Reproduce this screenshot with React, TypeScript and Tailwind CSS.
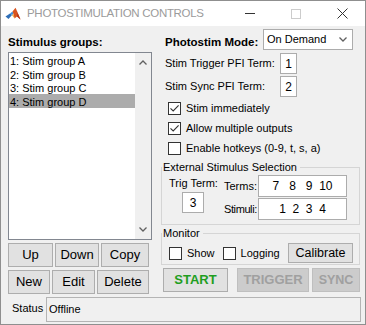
import React from 'react'

const groups = ['1: Stim group A', '2: Stim group B', '3: Stim group C', '4: Stim group D']

function MatlabIcon() {
  return (
    <svg width="16" height="14" viewBox="0 0 16 14" className="shrink-0">
      <path d="M0.5 9.5 L5 6.5 L7 8 L3.5 12 Z" fill="#2f6fb8" />
      <path d="M5 6.5 L7.5 4.5 L8.5 7 L7 8 Z" fill="#3f8fd8" />
      <path d="M7.5 4.5 L10.5 0.8 L15.5 12.5 L12 9.5 L9.5 11.5 L8.5 7 Z" fill="#d9541e" />
      <path d="M10.5 0.8 L12.5 6 L12 9.5 L15.5 12.5 Z" fill="#b3361a" />
      <path d="M8.5 7 L9.5 11.5 L7 8 Z" fill="#f0a030" />
    </svg>
  )
}

function Check({ checked }: { checked?: boolean }) {
  return (
    <span className="w-[13px] h-[13px] border border-[#333333] bg-white flex items-center justify-center shrink-0">
      {checked && (
        <svg width="11" height="11" viewBox="0 0 11 11">
          <path d="M1.5 5.3 L4.2 8 L9.6 2.4" fill="none" stroke="#333333" strokeWidth="1.1" />
        </svg>
      )}
    </span>
  )
}

function Btn({ label, w }: { label: string; w: string }) {
  return (
    <div className={`${w} h-[24px] bg-[#e1e1e1] border border-[#adadad] flex items-center justify-center text-[13px]`}>
      {label}
    </div>
  )
}

function Chevron({ up }: { up?: boolean }) {
  return (
    <svg width="8" height="5" viewBox="0 0 8 5">
      <path d={up ? 'M0.5 4.5 L4 1 L7.5 4.5' : 'M0.5 0.5 L4 4 L7.5 0.5'} fill="none" stroke="#606060" strokeWidth="1.3" />
    </svg>
  )
}

export default function App() {
  return (
    <div className="w-[366px] h-[325px] border border-[#8f8f8f] bg-[#f0f0f0] flex flex-col overflow-hidden font-['Liberation_Sans',Arial,sans-serif] text-black">
      {/* title bar */}
      <div className="h-[25px] bg-white flex items-center shrink-0">
        <div className="ml-[4px]">
          <MatlabIcon />
        </div>
        <span className="ml-[6px] text-[11.5px] tracking-[-0.3px] text-[#9b9b9b]">PHOTOSTIMULATION CONTROLS</span>
        <div className="ml-auto flex h-full">
          <div className="w-[46px] flex items-center justify-center">
            <div className="w-[10px] h-[1px] bg-[#333333]" />
          </div>
          <div className="w-[46px] flex items-center justify-center">
            <div className="w-[10px] h-[10px] border border-[#cccccc]" />
          </div>
          <div className="w-[46px] flex items-center justify-center">
            <svg width="11" height="11" viewBox="0 0 11 11">
              <path d="M0.5 0.5 L10.5 10.5 M10.5 0.5 L0.5 10.5" stroke="#333333" strokeWidth="1" />
            </svg>
          </div>
        </div>
      </div>

      <div className="flex-1 flex flex-col">
        <div className="flex">
          {/* left column */}
          <div className="ml-[7px] w-[144px] flex flex-col">
            <div className="mt-[9px] h-[14px] leading-[14px] text-[11.5px] font-bold">Stimulus groups:</div>
            <div className="mt-[3px] h-[188px] border border-[#828790] bg-white flex">
              <div className="flex-1 flex flex-col">
                {groups.map((g, i) => (
                  <div
                    key={g}
                    className={`h-[13.7px] pt-[3px] leading-[10.7px] pl-[1px] text-[11px] ${i === 3 ? 'bg-[#acacac]' : ''}`}
                  >
                    {g}
                  </div>
                ))}
              </div>
              <div className="w-[16px] bg-[#f0f0f0] flex flex-col items-center justify-between py-[7px]">
                <Chevron up />
                <Chevron />
              </div>
            </div>
            <div className="mt-[3px] flex gap-[2px]">
              <Btn label="Up" w="w-[45px]" />
              <Btn label="Down" w="w-[44px]" />
              <Btn label="Copy" w="w-[48px]" />
            </div>
            <div className="mt-[3px] flex gap-[2px]">
              <Btn label="New" w="w-[42px]" />
              <Btn label="Edit" w="w-[43px]" />
              <Btn label="Delete" w="w-[52px]" />
            </div>
          </div>

          {/* right column */}
          <div className="ml-[8px] w-[200px] flex flex-col text-[11px]">
            <div className="mt-[3px] h-[21px] flex items-start">
              <span className="mt-[6px] pl-[5px] leading-[14px] text-[11.5px] font-bold">Photostim Mode:</span>
              <div className="ml-auto mr-[7px] w-[90px] h-[21px] bg-white border border-[#acacac] flex items-center pl-[3px] pr-[5px]">
                <span className="flex-1">On Demand</span>
                <Chevron />
              </div>
            </div>
            <div className="mt-[3px] h-[21px] flex items-center">
              <span className="pl-[5px] w-[120px]">Stim Trigger PFI Term:</span>
              <div className="w-[17px] h-[21px] bg-white border border-[#acacac] flex items-center justify-center text-[12px]">1</div>
            </div>
            <div className="mt-[2px] h-[21px] flex items-center">
              <span className="pl-[5px] w-[120px]">Stim Sync PFI Term:</span>
              <div className="w-[17px] h-[21px] bg-white border border-[#acacac] flex items-center justify-center text-[12px]">2</div>
            </div>
            <div className="mt-[1px] flex flex-col">
              {[
                ['Stim immediately', true],
                ['Allow multiple outputs', true],
                ['Enable hotkeys (0-9, t, s, a)', false],
              ].map(([t, c]) => (
                <div key={t as string} className="h-[20px] flex items-center pl-[8px] gap-[5px]">
                  <Check checked={c as boolean} />
                  <span>{t as string}</span>
                </div>
              ))}
            </div>

            <fieldset className="mt-[2px] ml-[1px] w-[199px] border border-[#d5d5d5]">
              <legend className="pr-[3px] pl-[1px] leading-[14px]">External Stimulus Selection</legend>
              <div className="pt-[1px] pb-[4px] pl-[7px] flex">
                <div className="w-[55px] flex flex-col">
                  <span className="leading-[14px] mt-[1px]">Trig Term:</span>
                  <div className="mt-[2px] ml-[13px] w-[22px] h-[21px] bg-white border border-[#acacac] flex items-center justify-center text-[12px]">3</div>
                </div>
                <div className="flex flex-col gap-[1px]">
                  <div className="flex items-center">
                    <span className="w-[34px] shrink-0 whitespace-nowrap">Terms:</span>
                    <div className="w-[89px] h-[22px] bg-white border border-[#acacac] flex items-center justify-center text-[12px] whitespace-pre">7   8   9  10</div>
                  </div>
                  <div className="flex items-center">
                    <span className="w-[34px] shrink-0 whitespace-nowrap tracking-[-0.4px]">Stimuli:</span>
                    <div className="w-[89px] h-[22px] bg-white border border-[#acacac] flex items-center justify-center text-[12px] whitespace-pre">1  2  3  4</div>
                  </div>
                </div>
              </div>
            </fieldset>

            <fieldset className="mt-[1px] ml-[1px] w-[199px] border border-[#d5d5d5]">
              <legend className="pr-[3px] pl-[1px] leading-[14px]">Monitor</legend>
              <div className="mt-[3px] mb-[1px] h-[20px] pl-[7px] flex items-center">
                <Check />
                <span className="ml-[5px]">Show</span>
                <span className="ml-[8px]">
                  <Check />
                </span>
                <span className="ml-[5px]">Logging</span>
                <div className="ml-auto mr-[6px] w-[65px] h-[20px] bg-[#e1e1e1] border border-[#adadad] flex items-center justify-center text-[12.5px]">
                  Calibrate
                </div>
              </div>
            </fieldset>

            <div className="mt-[3px] flex">
              <div className="ml-[3px] w-[65px] h-[24px] bg-[#e1e1e1] border border-[#adadad] flex items-center justify-center text-[13px] font-bold text-[#1f9e1f]">
                START
              </div>
              <div className="ml-[9px] w-[72px] h-[24px] bg-[#cccccc] border border-[#bfbfbf] flex items-center justify-center text-[13px] font-bold text-[#a0a0a0]">
                TRIGGER
              </div>
              <div className="ml-[3px] w-[48px] h-[24px] bg-[#cccccc] border border-[#bfbfbf] flex items-center justify-center text-[12.5px] font-bold text-[#a0a0a0]">
                SYNC
              </div>
            </div>
          </div>
        </div>

        {/* status */}
        <div className="mt-[3px] flex items-center">
          <span className="ml-[11px] w-[34px] text-[11px] -mt-[3px]">Status</span>
          <div className="w-[315px] h-[25px] border border-[#b4b4b4] bg-[#f0f0f0] flex items-center pl-[2px] text-[11px]">
            Offline
          </div>
        </div>
      </div>
    </div>
  )
}
